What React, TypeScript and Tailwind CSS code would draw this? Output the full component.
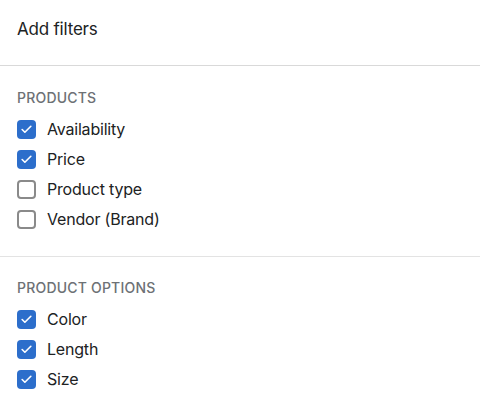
import { Check } from 'lucide-react';

type Item = { label: string; checked: boolean };

const sections: { title: string; items: Item[] }[] = [
  {
    title: 'Products',
    items: [
      { label: 'Availability', checked: true },
      { label: 'Price', checked: true },
      { label: 'Product type', checked: false },
      { label: 'Vendor (Brand)', checked: false },
    ],
  },
  {
    title: 'Product options',
    items: [
      { label: 'Color', checked: true },
      { label: 'Length', checked: true },
      { label: 'Size', checked: true },
    ],
  },
];

const Checkbox = ({ checked }: { checked: boolean }) =>
  checked ? (
    <span className="flex h-[19px] w-[19px] items-center justify-center rounded-[4px] bg-[#2c6ecb]">
      <Check className="h-[13px] w-[13px] text-white" strokeWidth={3} />
    </span>
  ) : (
    <span className="h-[19px] w-[19px] rounded-[4px] border-2 border-[#8a8a8a] bg-white" />
  );

export default function App() {
  return (
    <div className="min-h-[413px] w-full bg-white text-[#202223]" style={{ fontFamily: 'Inter, "Noto Sans", sans-serif' }}>
      <div className="border-b border-[#d9d9d9] px-[17px] pt-[17px] pb-6">
        <h1 className="text-[17px] leading-6 tracking-[-0.2px]">Add filters</h1>
      </div>

      {sections.map((section, i) => (
        <div
          key={section.title}
          className={i === 0 ? 'border-b border-[#e3e3e3] px-[17px] pt-[22px] pb-[22px]' : 'px-[17px] pt-[21px] pb-6'}
        >
          <h2 className="text-[14px] font-medium uppercase leading-5 tracking-[0.2px] text-[#6d7175]">
            {section.title}
          </h2>
          <ul className="mt-[6px]">
            {section.items.map((item) => (
              <li key={item.label} className="flex h-[30px] items-center gap-[11px]">
                <Checkbox checked={item.checked} />
                <span className="text-[16px] tracking-[-0.2px]">{item.label}</span>
              </li>
            ))}
          </ul>
        </div>
      ))}
    </div>
  );
}
